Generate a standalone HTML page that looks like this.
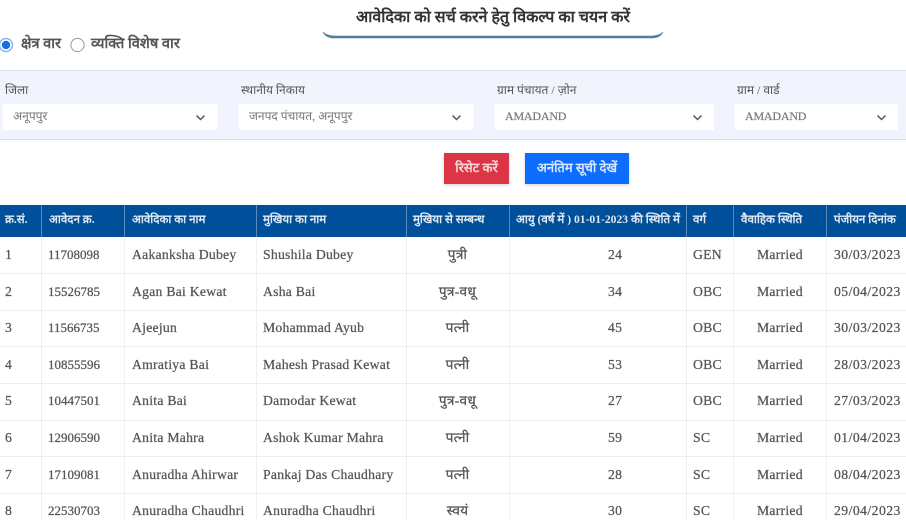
<!DOCTYPE html>
<html><head><meta charset="utf-8">
<style>
html,body{margin:0;padding:0;background:#fff}
#p{position:relative;width:906px;height:520px;overflow:hidden;background:#fff;font-family:"Liberation Serif","Noto Serif CJK SC",serif;color:#555;filter:blur(.35px)}
.a{position:absolute;white-space:nowrap;line-height:1}
.sel{position:absolute;top:104px;height:26px;background:#fff}
.sel svg{position:absolute;right:11px;top:10px}
.lb{position:absolute;top:84px;font-size:12px;color:#555;white-space:nowrap;line-height:1}
.sv{position:absolute;top:110px;font-size:12px;color:#777;white-space:nowrap;line-height:1}
.vl{position:absolute;top:237px;height:283px;width:1px;background:#edf0f2}
.hl{position:absolute;left:0;width:906px;height:1px;background:#eceef0}
.hv{position:absolute;top:205px;height:32px;width:1px;background:#5b8cc0}
.th{position:absolute;top:214px;font-size:11.6px;font-weight:bold;color:#dfe8f2;white-space:nowrap;line-height:1}
.c{position:absolute;font-size:13.7px;letter-spacing:.25px;color:#555;-webkit-text-stroke:.25px #555;white-space:nowrap;line-height:1}
.n{font-size:13px;letter-spacing:0}
.d{letter-spacing:.45px}
</style></head><body>
<div id="p">
<div class="a" style="left:356px;top:10px;font-size:16px;font-weight:bold;color:#333">आवेदिका को सर्च करने हेतु विकल्प का चयन करें</div>
<svg class="a" style="left:320px;top:28px" width="346" height="14" viewBox="0 0 346 14"><path d="M3 4 Q6 10 14 10 L332 10 Q340 10 343 4 Q340 7.5 332 8 L14 8 Q6 7.5 3 4Z" fill="#4f7f9f" stroke="#4f7f9f" stroke-width=".6"/></svg>

<svg class="a" style="left:0;top:37px" width="16" height="16"><circle cx="6" cy="8" r="6.5" fill="#fff" stroke="#8ab4ec" stroke-width="1.5"/><circle cx="6" cy="8" r="4.2" fill="#1a6fe0"/></svg>
<div class="a" style="left:21px;top:37px;font-size:14.6px;font-weight:bold;color:#555">क्षेत्र वार</div>
<svg class="a" style="left:69px;top:37px" width="17" height="16"><circle cx="8.5" cy="8" r="6.6" fill="#fff" stroke="#999" stroke-width="1"/></svg>
<div class="a" style="left:91px;top:37px;font-size:14.6px;font-weight:bold;color:#555">व्यक्ति विशेष वार</div>

<div class="a" style="left:0;top:70px;width:906px;height:70px;background:#f1f4fc;border-top:1px solid #d6e2ee;border-bottom:1px solid #d9dee8;box-sizing:border-box"></div>
<div class="lb" style="left:5px">जिला</div>
<div class="lb" style="left:241px">स्थानीय निकाय</div>
<div class="lb" style="left:497px">ग्राम पंचायत / ज़ोन</div>
<div class="lb" style="left:737px">ग्राम / वार्ड</div>

<div class="sel" style="left:3px;width:214px"><svg width="11" height="7"><path d="M1.5 1.5L5.5 5.5L9.5 1.5" fill="none" stroke="#555" stroke-width="1.5"/></svg></div>
<div class="sel" style="left:239px;width:234px"><svg width="11" height="7"><path d="M1.5 1.5L5.5 5.5L9.5 1.5" fill="none" stroke="#555" stroke-width="1.5"/></svg></div>
<div class="sel" style="left:495px;width:219px"><svg width="11" height="7"><path d="M1.5 1.5L5.5 5.5L9.5 1.5" fill="none" stroke="#555" stroke-width="1.5"/></svg></div>
<div class="sel" style="left:735px;width:163px"><svg width="11" height="7"><path d="M1.5 1.5L5.5 5.5L9.5 1.5" fill="none" stroke="#555" stroke-width="1.5"/></svg></div>
<div class="sv" style="left:13px">अनूपपुर</div>
<div class="sv" style="left:249px">जनपद पंचायत, अनूपपुर</div>
<div class="sv" style="left:505px;letter-spacing:-.2px;-webkit-text-stroke:.2px #777">AMADAND</div>
<div class="sv" style="left:745px;letter-spacing:-.2px;-webkit-text-stroke:.2px #777">AMADAND</div>

<div class="a" style="left:444px;top:153px;width:65px;height:31px;background:#dc3545;box-shadow:0 1px 3px rgba(0,0,0,.2);color:#f5d5d8;font-size:13px;font-weight:bold;text-align:center;line-height:29px">रिसेट करें</div>
<div class="a" style="left:525px;top:153px;width:104px;height:31px;background:#0d6efd;box-shadow:0 1px 3px rgba(0,0,0,.2);color:#d5e5ff;font-size:13px;font-weight:bold;text-align:center;line-height:29px">अनंतिम सूची देखें</div>

<div class="a" style="left:0;top:205px;width:906px;height:32px;background:#004f9b"></div>
<div class="hv" style="left:41px"></div><div class="hv" style="left:124px"></div><div class="hv" style="left:256px"></div><div class="hv" style="left:406px"></div><div class="hv" style="left:509px"></div><div class="hv" style="left:686px"></div><div class="hv" style="left:733px"></div><div class="hv" style="left:826px"></div>
<div class="th" style="left:5px">क्र.सं.</div>
<div class="th" style="left:49px">आवेदन क्र.</div>
<div class="th" style="left:132px">आवेदिका का नाम</div>
<div class="th" style="left:263px">मुखिया का नाम</div>
<div class="th" style="left:413px">मुखिया से सम्बन्ध</div>
<div class="th" style="left:516px">आयु (वर्ष में ) 01-01-2023 की स्थिति में</div>
<div class="th" style="left:693px">वर्ग</div>
<div class="th" style="left:741px">वैवाहिक स्थिति</div>
<div class="th" style="left:834px">पंजीयन दिनांक</div>

<div class="vl" style="left:41px"></div><div class="vl" style="left:124px"></div><div class="vl" style="left:256px"></div><div class="vl" style="left:406px"></div><div class="vl" style="left:509px"></div><div class="vl" style="left:686px"></div><div class="vl" style="left:733px"></div><div class="vl" style="left:826px"></div>
<div class="hl" style="top:273px"></div><div class="hl" style="top:310px"></div><div class="hl" style="top:346px"></div><div class="hl" style="top:383px"></div><div class="hl" style="top:420px"></div><div class="hl" style="top:456px"></div><div class="hl" style="top:493px"></div>

<div class="c" style="left:5px;top:248px">1</div><div class="c n" style="left:48px;top:248px">11708098</div><div class="c" style="left:132px;top:248px">Aakanksha Dubey</div><div class="c" style="left:263px;top:248px">Shushila Dubey</div><div class="c" style="left:406px;width:103px;text-align:center;top:248px">पुत्री</div><div class="c" style="left:608px;top:248px">24</div><div class="c" style="left:693px;top:248px">GEN</div><div class="c" style="left:757px;top:248px">Married</div><div class="c d" style="left:834px;top:248px">30/03/2023</div>
<div class="c" style="left:5px;top:285px">2</div><div class="c n" style="left:48px;top:285px">15526785</div><div class="c" style="left:132px;top:285px">Agan Bai Kewat</div><div class="c" style="left:263px;top:285px">Asha Bai</div><div class="c" style="left:406px;width:103px;text-align:center;top:285px">पुत्र-वधू</div><div class="c" style="left:608px;top:285px">34</div><div class="c" style="left:693px;top:285px">OBC</div><div class="c" style="left:757px;top:285px">Married</div><div class="c d" style="left:834px;top:285px">05/04/2023</div>
<div class="c" style="left:5px;top:321px">3</div><div class="c n" style="left:48px;top:321px">11566735</div><div class="c" style="left:132px;top:321px">Ajeejun</div><div class="c" style="left:263px;top:321px">Mohammad Ayub</div><div class="c" style="left:406px;width:103px;text-align:center;top:321px">पत्नी</div><div class="c" style="left:608px;top:321px">45</div><div class="c" style="left:693px;top:321px">OBC</div><div class="c" style="left:757px;top:321px">Married</div><div class="c d" style="left:834px;top:321px">30/03/2023</div>
<div class="c" style="left:5px;top:358px">4</div><div class="c n" style="left:48px;top:358px">10855596</div><div class="c" style="left:132px;top:358px">Amratiya Bai</div><div class="c" style="left:263px;top:358px">Mahesh Prasad Kewat</div><div class="c" style="left:406px;width:103px;text-align:center;top:358px">पत्नी</div><div class="c" style="left:608px;top:358px">53</div><div class="c" style="left:693px;top:358px">OBC</div><div class="c" style="left:757px;top:358px">Married</div><div class="c d" style="left:834px;top:358px">28/03/2023</div>
<div class="c" style="left:5px;top:394px">5</div><div class="c n" style="left:48px;top:394px">10447501</div><div class="c" style="left:132px;top:394px">Anita Bai</div><div class="c" style="left:263px;top:394px">Damodar Kewat</div><div class="c" style="left:406px;width:103px;text-align:center;top:394px">पुत्र-वधू</div><div class="c" style="left:608px;top:394px">27</div><div class="c" style="left:693px;top:394px">OBC</div><div class="c" style="left:757px;top:394px">Married</div><div class="c d" style="left:834px;top:394px">27/03/2023</div>
<div class="c" style="left:5px;top:431px">6</div><div class="c n" style="left:48px;top:431px">12906590</div><div class="c" style="left:132px;top:431px">Anita Mahra</div><div class="c" style="left:263px;top:431px">Ashok Kumar Mahra</div><div class="c" style="left:406px;width:103px;text-align:center;top:431px">पत्नी</div><div class="c" style="left:608px;top:431px">59</div><div class="c" style="left:693px;top:431px">SC</div><div class="c" style="left:757px;top:431px">Married</div><div class="c d" style="left:834px;top:431px">01/04/2023</div>
<div class="c" style="left:5px;top:468px">7</div><div class="c n" style="left:48px;top:468px">17109081</div><div class="c" style="left:132px;top:468px">Anuradha Ahirwar</div><div class="c" style="left:263px;top:468px">Pankaj Das Chaudhary</div><div class="c" style="left:406px;width:103px;text-align:center;top:468px">पत्नी</div><div class="c" style="left:608px;top:468px">28</div><div class="c" style="left:693px;top:468px">SC</div><div class="c" style="left:757px;top:468px">Married</div><div class="c d" style="left:834px;top:468px">08/04/2023</div>
<div class="c" style="left:5px;top:504px">8</div><div class="c n" style="left:48px;top:504px">22530703</div><div class="c" style="left:132px;top:504px">Anuradha Chaudhri</div><div class="c" style="left:263px;top:504px">Anuradha Chaudhri</div><div class="c" style="left:406px;width:103px;text-align:center;top:504px">स्वयं</div><div class="c" style="left:608px;top:504px">30</div><div class="c" style="left:693px;top:504px">SC</div><div class="c" style="left:757px;top:504px">Married</div><div class="c d" style="left:834px;top:504px">29/04/2023</div>
</div>
</body></html>
